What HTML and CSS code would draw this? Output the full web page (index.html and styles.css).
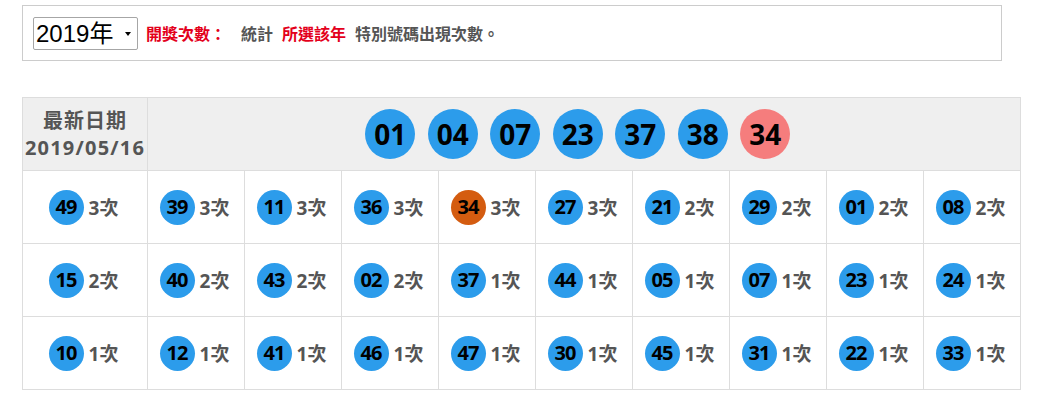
FILE: index.html
```html
<!DOCTYPE html>
<html lang="zh-Hant">
<head>
<meta charset="utf-8">
<title>特別號碼出現次數</title>
<link rel="stylesheet" href="styles.css">
</head>
<body>
<div class="page">
  <div class="filter">
    <span class="select-wrap">
      <select class="year">
        <option>2019年</option>
        <option>2018年</option>
        <option>2017年</option>
      </select>
    </span>
    <span class="label red">開獎次數：</span>
    <span class="word">統計</span>
    <span class="word red">所選該年</span>
    <span class="word">特別號碼出現次數。</span>
  </div>

  <div class="board">
    <div class="cell head date">
      <div class="date-title">最新日期</div>
      <div class="date-value">2019/05/16</div>
    </div>
    <div class="cell head balls">
      <span class="ball big">01</span>
      <span class="ball big">04</span>
      <span class="ball big">07</span>
      <span class="ball big">23</span>
      <span class="ball big">37</span>
      <span class="ball big">38</span>
      <span class="ball big special">34</span>
    </div>

    <div class="cell"><span class="ball">49</span><span class="count">3次</span></div>
    <div class="cell"><span class="ball">39</span><span class="count">3次</span></div>
    <div class="cell"><span class="ball">11</span><span class="count">3次</span></div>
    <div class="cell"><span class="ball">36</span><span class="count">3次</span></div>
    <div class="cell"><span class="ball hit">34</span><span class="count">3次</span></div>
    <div class="cell"><span class="ball">27</span><span class="count">3次</span></div>
    <div class="cell"><span class="ball">21</span><span class="count">2次</span></div>
    <div class="cell"><span class="ball">29</span><span class="count">2次</span></div>
    <div class="cell"><span class="ball">01</span><span class="count">2次</span></div>
    <div class="cell"><span class="ball">08</span><span class="count">2次</span></div>

    <div class="cell"><span class="ball">15</span><span class="count">2次</span></div>
    <div class="cell"><span class="ball">40</span><span class="count">2次</span></div>
    <div class="cell"><span class="ball">43</span><span class="count">2次</span></div>
    <div class="cell"><span class="ball">02</span><span class="count">2次</span></div>
    <div class="cell"><span class="ball">37</span><span class="count">1次</span></div>
    <div class="cell"><span class="ball">44</span><span class="count">1次</span></div>
    <div class="cell"><span class="ball">05</span><span class="count">1次</span></div>
    <div class="cell"><span class="ball">07</span><span class="count">1次</span></div>
    <div class="cell"><span class="ball">23</span><span class="count">1次</span></div>
    <div class="cell"><span class="ball">24</span><span class="count">1次</span></div>

    <div class="cell"><span class="ball">10</span><span class="count">1次</span></div>
    <div class="cell"><span class="ball">12</span><span class="count">1次</span></div>
    <div class="cell"><span class="ball">41</span><span class="count">1次</span></div>
    <div class="cell"><span class="ball">46</span><span class="count">1次</span></div>
    <div class="cell"><span class="ball">47</span><span class="count">1次</span></div>
    <div class="cell"><span class="ball">30</span><span class="count">1次</span></div>
    <div class="cell"><span class="ball">45</span><span class="count">1次</span></div>
    <div class="cell"><span class="ball">31</span><span class="count">1次</span></div>
    <div class="cell"><span class="ball">22</span><span class="count">1次</span></div>
    <div class="cell"><span class="ball">33</span><span class="count">1次</span></div>
  </div>
</div>
</body>
</html>
```

FILE: styles.css
```css
* {
  box-sizing: border-box;
}

body {
  margin: 0;
  background: #fff;
  font-family: "Noto Sans", "Noto Sans CJK TC", sans-serif;
  color: #555;
}

.page {
  padding: 5px 0 0 22px;
}

.filter {
  width: 980px;
  height: 56px;
  border: 1px solid #ccc;
  padding-left: 10px;
  display: flex;
  align-items: center;
  font-size: 16px;
  font-weight: bold;
  color: #555;
}

.select-wrap {
  position: relative;
  display: inline-block;
  margin-right: 8px;
}

.year {
  appearance: none;
  -webkit-appearance: none;
  width: 105px;
  height: 33px;
  margin: 0;
  padding: 0 0 0 2px;
  border: 1px solid #a6a6a6;
  border-radius: 2px;
  background: #fff;
  color: #000;
  font-family: "Liberation Sans", "Noto Sans CJK TC", sans-serif;
  font-size: 24px;
  line-height: 31px;
}

.select-wrap::after {
  content: "";
  position: absolute;
  right: 7px;
  top: 15px;
  border-left: 3px solid transparent;
  border-right: 3px solid transparent;
  border-top: 4px solid #000;
  pointer-events: none;
}

.red {
  color: #e3001b;
}

.label {
  margin-right: 15px;
}

.word {
  margin-right: 9px;
}

.board {
  margin-top: 36px;
  width: 999px;
  display: grid;
  grid-template-columns: 125px repeat(9, 97px);
  grid-auto-rows: 73px;
  border-top: 1px solid #ddd;
  border-left: 1px solid #ddd;
}

.cell {
  border-right: 1px solid #ddd;
  border-bottom: 1px solid #ddd;
  display: flex;
  align-items: center;
  justify-content: center;
  gap: 5px;
  font-weight: bold;
  padding-right: 3px;
}

.head {
  background: #efefef;
}

.date {
  flex-direction: column;
  gap: 0;
  padding-right: 0;
  color: #555;
  font-size: 20px;
  line-height: 27px;
}

.date-title {
  font-size: 20px;
  letter-spacing: 1px;
}

.date-value {
  font-size: 20px;
  letter-spacing: 1.2px;
}

.balls {
  grid-column: span 9;
  gap: 12.5px;
  padding-right: 12.5px;
}

.ball {
  width: 35px;
  height: 35px;
  border-radius: 50%;
  background: #2c9ceb;
  color: #000;
  display: inline-flex;
  align-items: center;
  justify-content: center;
  font-size: 20px;
  font-weight: bold;
  letter-spacing: -0.8px;
  padding-bottom: 1px;
}

.ball.big {
  width: 50px;
  height: 50px;
  font-size: 28px;
  letter-spacing: 0;
}

.ball.special {
  background: #f57d7d;
}

.ball.hit {
  background: #d45c10;
}

.count {
  font-size: 19px;
  color: #555;
}
```
